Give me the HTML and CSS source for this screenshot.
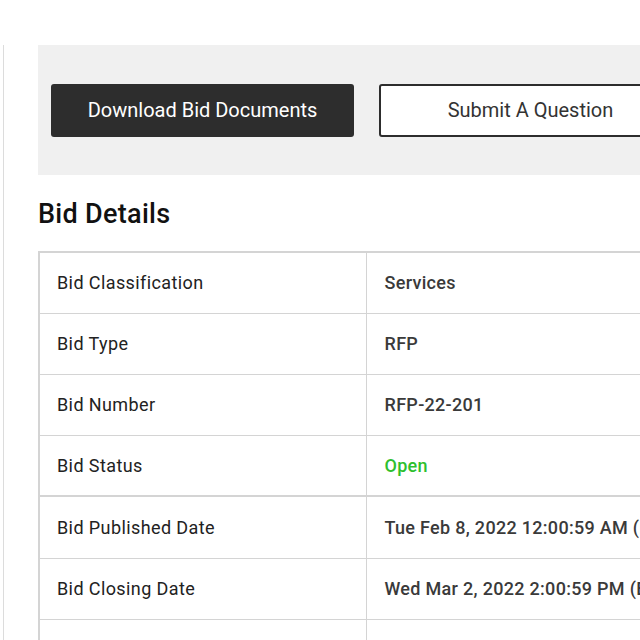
FILE: index.html
```html
<!DOCTYPE html>
<html lang="en">
<head>
    <meta charset="UTF-8">
    <meta name="viewport" content="width=device-width, initial-scale=1.0">
    <title>Bid Details</title>
    <link rel="stylesheet" href="styles.css">
</head>
<body>
    <div class="page">
        <div class="content">
            <div class="actions">
                <button class="btn btn-dark">Download Bid Documents</button>
                <button class="btn btn-outline">Submit A Question</button>
            </div>

            <h2 class="section-title">Bid Details</h2>

            <table class="details">
                <tr>
                    <td class="label">Bid Classification</td>
                    <td class="value">Services</td>
                </tr>
                <tr>
                    <td class="label">Bid Type</td>
                    <td class="value">RFP</td>
                </tr>
                <tr>
                    <td class="label">Bid Number</td>
                    <td class="value">RFP-22-201</td>
                </tr>
                <tr>
                    <td class="label">Bid Status</td>
                    <td class="value open">Open</td>
                </tr>
                <tr class="group-start">
                    <td class="label">Bid Published Date</td>
                    <td class="value">Tue Feb 8, 2022 12:00:59 AM (ET)</td>
                </tr>
                <tr>
                    <td class="label">Bid Closing Date</td>
                    <td class="value">Wed Mar 2, 2022 2:00:59 PM (ET)</td>
                </tr>
                <tr>
                    <td class="label">&nbsp;</td>
                    <td class="value">&nbsp;</td>
                </tr>
            </table>
        </div>
    </div>
</body>
</html>
```

FILE: styles.css
```css
html, body {
    margin: 0;
    padding: 0;
    background: #fff;
    overflow: hidden;
}

body {
    font-family: Roboto, "Liberation Sans", sans-serif;
    color: #222;
}

.page {
    margin-top: 45px;
    margin-left: 3px;
    border-left: 1px solid #dcdcdc;
    height: 600px;
    padding-left: 34px;
}

.content {
    width: 800px;
}

.actions {
    background-color: #f0f0f0;
    height: 130px;
    padding: 0 13px;
    display: flex;
    align-items: center;
    gap: 25px;
}

.btn {
    font-family: Roboto, "Liberation Sans", sans-serif;
    font-size: 20px;
    height: 53px;
    width: 303px;
    border-radius: 3px;
    cursor: pointer;
}

.btn-dark {
    background-color: #2d2d2d;
    color: #fff;
    border: none;
}

.btn-outline {
    background-color: #fff;
    color: #333;
    border: 2px solid #2d2d2d;
}

.section-title {
    font-size: 27px;
    line-height: 32px;
    letter-spacing: 0.3px;
    font-weight: 500;
    color: #111;
    margin: 23px 0 21px 0;
}

.details {
    border-collapse: collapse;
    width: 800px;
    border-top: 2px solid #d4d4d4;
    border-left: 2px solid #d4d4d4;
}

.details td {
    height: 61px;
    font-size: 18px;
    border-bottom: 1px solid #d4d4d4;
    box-sizing: border-box;
    white-space: nowrap;
}

.details .label {
    width: 327px;
    padding: 0 17px;
    letter-spacing: 0.4px;
    color: #222;
    border-right: 1px solid #d4d4d4;
}

.details .value {
    padding: 0 18px;
    letter-spacing: 0.3px;
    font-weight: 500;
    color: #3a3a3a;
}

.details .open {
    color: #2ec02e;
}

.details .group-start td {
    height: 62px;
    border-top: 2px solid #d4d4d4;
}
```
